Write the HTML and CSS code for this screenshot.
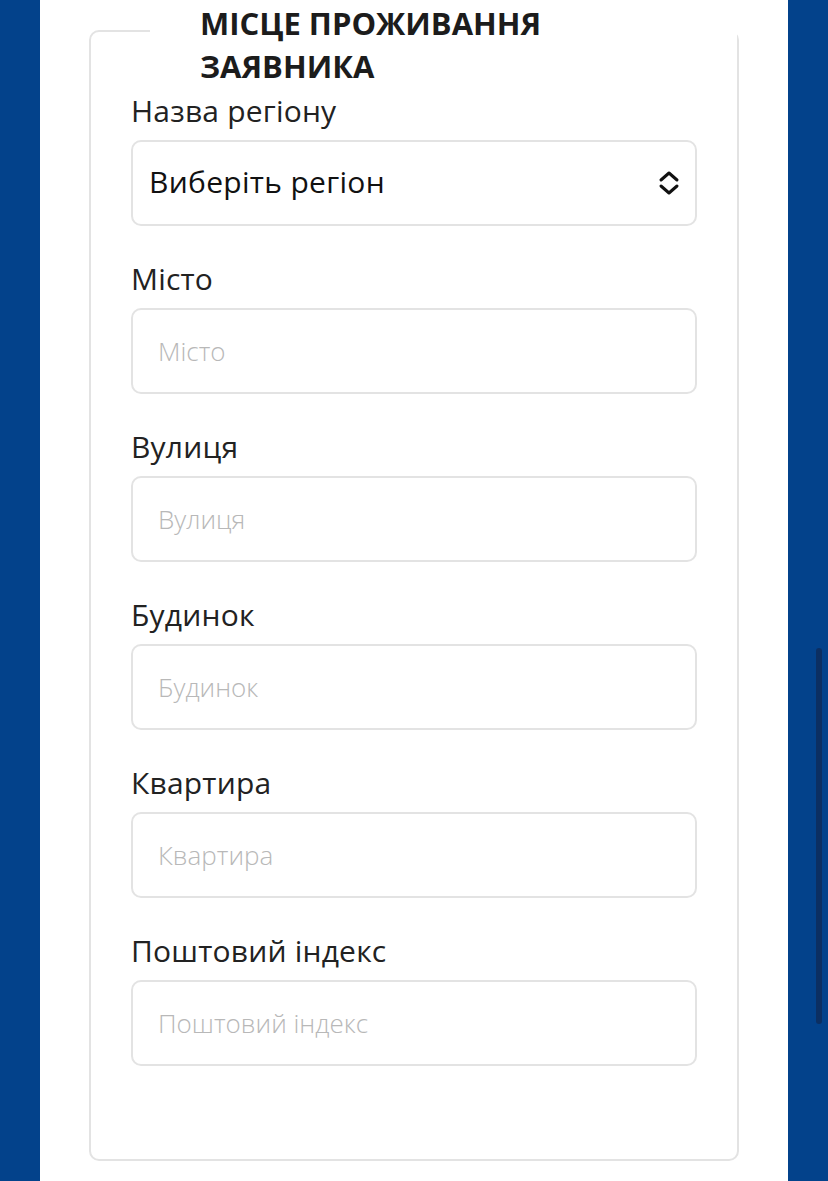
FILE: index.html
```html
<!DOCTYPE html>
<html lang="uk">
<head>
<meta charset="utf-8">
<title>Місце проживання заявника</title>
<link rel="stylesheet" href="styles.css">
</head>
<body>
<div class="page">
  <div class="side"></div>
  <main class="main">
    <section class="card">
      <h2 class="card-title">МІСЦЕ ПРОЖИВАННЯ ЗАЯВНИКА</h2>
      <div class="fields">
        <div class="field">
          <label class="label">Назва регіону</label>
          <div class="select-box">
            <select class="select">
              <option>Виберіть регіон</option>
            </select>
            <svg class="select-arrow" width="22" height="24" viewBox="0 0 22 24" aria-hidden="true">
              <polyline points="3,9 11,2 19,9" fill="none" stroke="#111" stroke-width="3" stroke-linecap="round" stroke-linejoin="round"/>
              <polyline points="3,15 11,22 19,15" fill="none" stroke="#111" stroke-width="3" stroke-linecap="round" stroke-linejoin="round"/>
            </svg>
          </div>
        </div>
        <div class="field">
          <label class="label">Місто</label>
          <input class="input" type="text" placeholder="Місто">
        </div>
        <div class="field">
          <label class="label">Вулиця</label>
          <input class="input" type="text" placeholder="Вулиця">
        </div>
        <div class="field">
          <label class="label">Будинок</label>
          <input class="input" type="text" placeholder="Будинок">
        </div>
        <div class="field">
          <label class="label">Квартира</label>
          <input class="input" type="text" placeholder="Квартира">
        </div>
        <div class="field">
          <label class="label">Поштовий індекс</label>
          <input class="input" type="text" placeholder="Поштовий індекс">
        </div>
      </div>
    </section>
  </main>
  <div class="side"></div>
</div>
<div class="scroll-thumb"></div>
</body>
</html>
```

FILE: styles.css
```css
* {
  box-sizing: border-box;
}

html, body {
  margin: 0;
  padding: 0;
  height: 1181px;
  overflow: hidden;
  background: #03428b;
  font-family: "Open Sans", "Noto Sans", "DejaVu Sans", sans-serif;
}

.page {
  display: flex;
  height: 1181px;
}

.side {
  width: 40px;
  flex: 0 0 40px;
  background: #03428b;
}

.main {
  flex: 0 0 748px;
  background: #fff;
  padding: 30px 49px 0;
}

.card {
  border: 2px solid #e3e3e3;
  border-radius: 10px;
  padding: 0 40px 93px;
}

.card-title {
  margin: -30px -40px 1px 19px;
  padding: 0 137px 0 50px;
  background: #fff;
  font-size: 31px;
  line-height: 43px;
  font-weight: 700;
  color: #1c1c1c;
}

.fields {
  display: flex;
  flex-direction: column;
  gap: 31px;
}

.field {
  display: flex;
  flex-direction: column;
  gap: 9px;
}

.label {
  padding-top: 2px;
  font-size: 30px;
  line-height: 40px;
  letter-spacing: 0.2px;
  color: #222;
}

.select-box {
  display: flex;
  align-items: center;
  height: 86px;
  border: 2px solid #e3e3e3;
  border-radius: 10px;
  padding: 0 15px 0 16px;
}

.select {
  flex: 1;
  appearance: none;
  -webkit-appearance: none;
  border: none;
  background: transparent;
  font-family: inherit;
  font-size: 30px;
  letter-spacing: 0.3px;
  color: #111;
  padding: 0 0 3px;
  outline: none;
}

.select-arrow {
  flex: 0 0 22px;
}

.input {
  height: 86px;
  width: 100%;
  border: 2px solid #e3e3e3;
  border-radius: 10px;
  padding: 0 25px;
  font-family: inherit;
  font-size: 26px;
  color: #222;
  background: #fff;
  outline: none;
}

.input::placeholder {
  color: #b8b8b8;
  font-weight: 300;
}

.scroll-thumb {
  position: absolute;
  right: 6px;
  top: 648px;
  width: 6px;
  height: 376px;
  border-radius: 3px;
  background: #0c2f62;
}
```
